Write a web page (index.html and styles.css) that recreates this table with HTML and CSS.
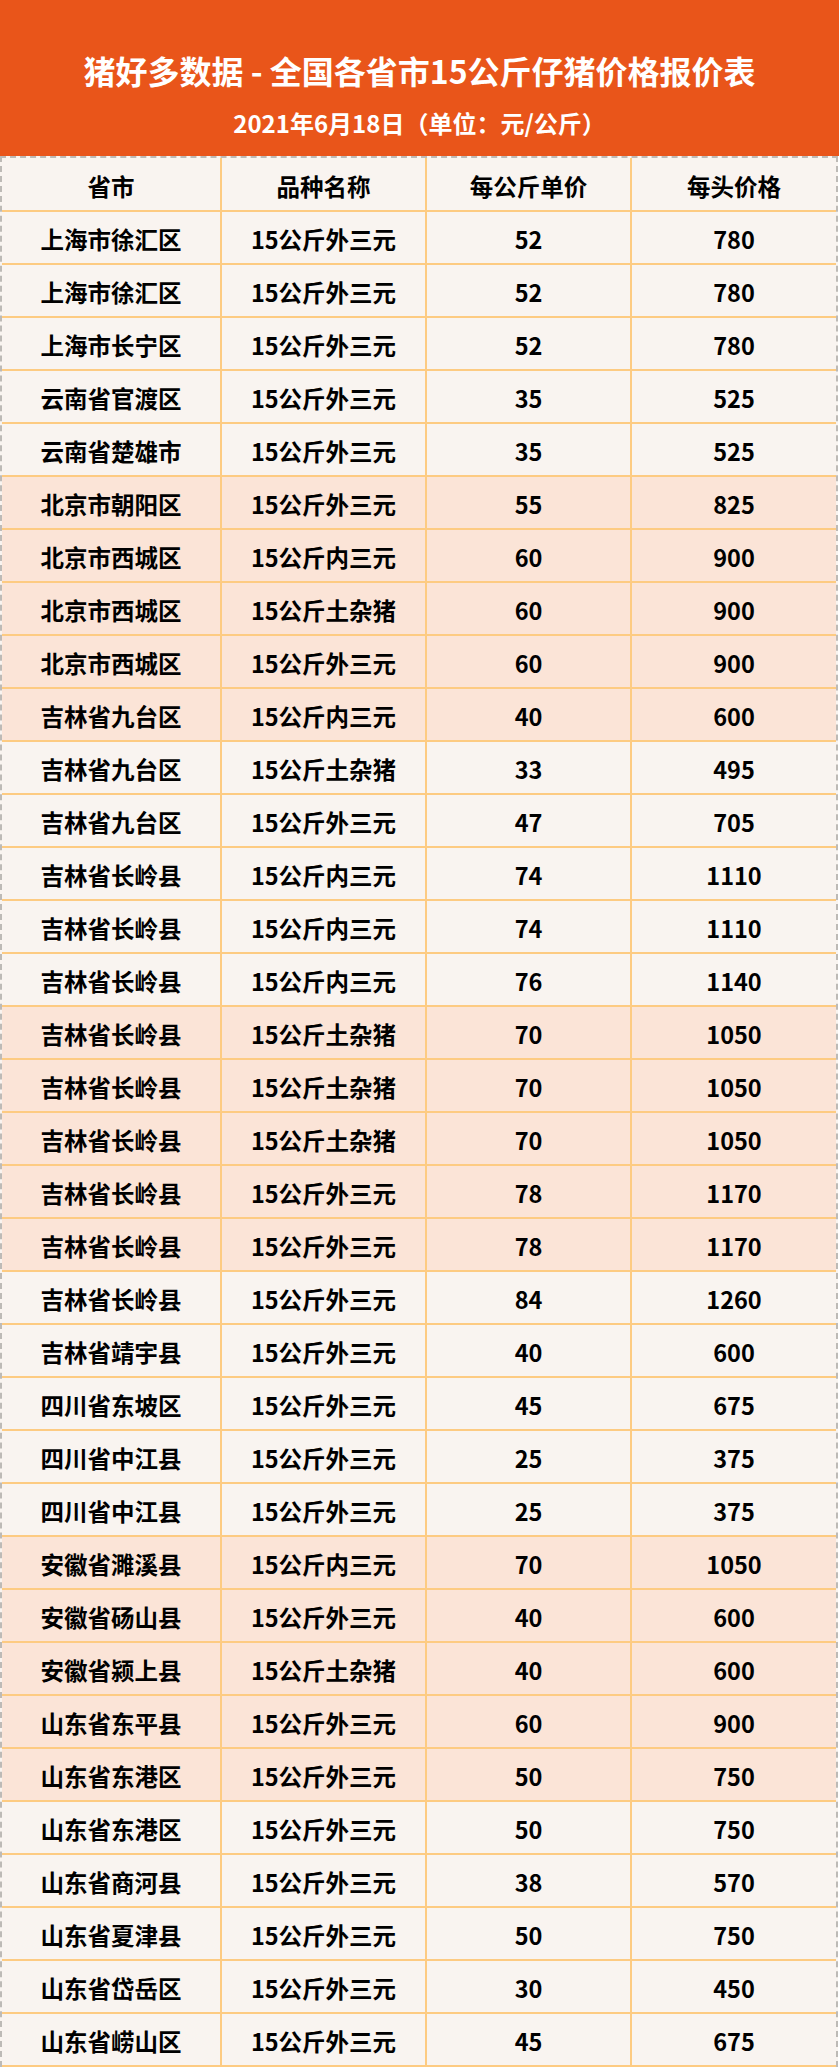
FILE: index.html
```html
<!DOCTYPE html>
<html lang="zh-CN">
<head>
<meta charset="utf-8">
<title>猪好多数据 - 全国各省市15公斤仔猪价格报价表</title>
<link rel="stylesheet" href="styles.css">
</head>
<body>
<div class="page">
  <header class="banner">
    <h1 class="title">猪好多数据 - 全国各省市15公斤仔猪价格报价表</h1>
    <p class="subtitle">2021年6月18日（单位：元/公斤）</p>
  </header>
  <div class="table">
    <div class="row head"><div class="cell">省市</div><div class="cell">品种名称</div><div class="cell">每公斤单价</div><div class="cell">每头价格</div></div>
    <div class="row"><div class="cell">上海市徐汇区</div><div class="cell">15公斤外三元</div><div class="cell">52</div><div class="cell">780</div></div>
    <div class="row"><div class="cell">上海市徐汇区</div><div class="cell">15公斤外三元</div><div class="cell">52</div><div class="cell">780</div></div>
    <div class="row"><div class="cell">上海市长宁区</div><div class="cell">15公斤外三元</div><div class="cell">52</div><div class="cell">780</div></div>
    <div class="row"><div class="cell">云南省官渡区</div><div class="cell">15公斤外三元</div><div class="cell">35</div><div class="cell">525</div></div>
    <div class="row"><div class="cell">云南省楚雄市</div><div class="cell">15公斤外三元</div><div class="cell">35</div><div class="cell">525</div></div>
    <div class="row hl"><div class="cell">北京市朝阳区</div><div class="cell">15公斤外三元</div><div class="cell">55</div><div class="cell">825</div></div>
    <div class="row hl"><div class="cell">北京市西城区</div><div class="cell">15公斤内三元</div><div class="cell">60</div><div class="cell">900</div></div>
    <div class="row hl"><div class="cell">北京市西城区</div><div class="cell">15公斤土杂猪</div><div class="cell">60</div><div class="cell">900</div></div>
    <div class="row hl"><div class="cell">北京市西城区</div><div class="cell">15公斤外三元</div><div class="cell">60</div><div class="cell">900</div></div>
    <div class="row hl"><div class="cell">吉林省九台区</div><div class="cell">15公斤内三元</div><div class="cell">40</div><div class="cell">600</div></div>
    <div class="row"><div class="cell">吉林省九台区</div><div class="cell">15公斤土杂猪</div><div class="cell">33</div><div class="cell">495</div></div>
    <div class="row"><div class="cell">吉林省九台区</div><div class="cell">15公斤外三元</div><div class="cell">47</div><div class="cell">705</div></div>
    <div class="row"><div class="cell">吉林省长岭县</div><div class="cell">15公斤内三元</div><div class="cell">74</div><div class="cell">1110</div></div>
    <div class="row"><div class="cell">吉林省长岭县</div><div class="cell">15公斤内三元</div><div class="cell">74</div><div class="cell">1110</div></div>
    <div class="row"><div class="cell">吉林省长岭县</div><div class="cell">15公斤内三元</div><div class="cell">76</div><div class="cell">1140</div></div>
    <div class="row hl"><div class="cell">吉林省长岭县</div><div class="cell">15公斤土杂猪</div><div class="cell">70</div><div class="cell">1050</div></div>
    <div class="row hl"><div class="cell">吉林省长岭县</div><div class="cell">15公斤土杂猪</div><div class="cell">70</div><div class="cell">1050</div></div>
    <div class="row hl"><div class="cell">吉林省长岭县</div><div class="cell">15公斤土杂猪</div><div class="cell">70</div><div class="cell">1050</div></div>
    <div class="row hl"><div class="cell">吉林省长岭县</div><div class="cell">15公斤外三元</div><div class="cell">78</div><div class="cell">1170</div></div>
    <div class="row hl"><div class="cell">吉林省长岭县</div><div class="cell">15公斤外三元</div><div class="cell">78</div><div class="cell">1170</div></div>
    <div class="row"><div class="cell">吉林省长岭县</div><div class="cell">15公斤外三元</div><div class="cell">84</div><div class="cell">1260</div></div>
    <div class="row"><div class="cell">吉林省靖宇县</div><div class="cell">15公斤外三元</div><div class="cell">40</div><div class="cell">600</div></div>
    <div class="row"><div class="cell">四川省东坡区</div><div class="cell">15公斤外三元</div><div class="cell">45</div><div class="cell">675</div></div>
    <div class="row"><div class="cell">四川省中江县</div><div class="cell">15公斤外三元</div><div class="cell">25</div><div class="cell">375</div></div>
    <div class="row"><div class="cell">四川省中江县</div><div class="cell">15公斤外三元</div><div class="cell">25</div><div class="cell">375</div></div>
    <div class="row hl"><div class="cell">安徽省濉溪县</div><div class="cell">15公斤内三元</div><div class="cell">70</div><div class="cell">1050</div></div>
    <div class="row hl"><div class="cell">安徽省砀山县</div><div class="cell">15公斤外三元</div><div class="cell">40</div><div class="cell">600</div></div>
    <div class="row hl"><div class="cell">安徽省颍上县</div><div class="cell">15公斤土杂猪</div><div class="cell">40</div><div class="cell">600</div></div>
    <div class="row hl"><div class="cell">山东省东平县</div><div class="cell">15公斤外三元</div><div class="cell">60</div><div class="cell">900</div></div>
    <div class="row hl"><div class="cell">山东省东港区</div><div class="cell">15公斤外三元</div><div class="cell">50</div><div class="cell">750</div></div>
    <div class="row"><div class="cell">山东省东港区</div><div class="cell">15公斤外三元</div><div class="cell">50</div><div class="cell">750</div></div>
    <div class="row"><div class="cell">山东省商河县</div><div class="cell">15公斤外三元</div><div class="cell">38</div><div class="cell">570</div></div>
    <div class="row"><div class="cell">山东省夏津县</div><div class="cell">15公斤外三元</div><div class="cell">50</div><div class="cell">750</div></div>
    <div class="row"><div class="cell">山东省岱岳区</div><div class="cell">15公斤外三元</div><div class="cell">30</div><div class="cell">450</div></div>
    <div class="row"><div class="cell">山东省崂山区</div><div class="cell">15公斤外三元</div><div class="cell">45</div><div class="cell">675</div></div>
  </div>
</div>
</body>
</html>
```
FILE: styles.css
```css
* { box-sizing: border-box; }
html, body { margin: 0; padding: 0; background: #ffffff; }
body {
  font-family: "Noto Sans CJK SC", "Noto Sans", sans-serif;
  color: #000;
  width: 839px;
}
.page { width: 839px; }

.banner {
  height: 156px;
  background: #e9551a;
  color: #fff;
  display: flex;
  flex-direction: column;
  align-items: center;
  padding-top: 50px;
}
.title {
  margin: 0;
  font-size: 32px;
  font-weight: 700;
  line-height: 40px;
  white-space: nowrap;
}
.subtitle {
  margin: 18px 0 0;
  font-size: 24px;
  font-weight: 700;
  line-height: 30px;
  white-space: nowrap;
}

.table {
  width: 838px;
  border-top: 2px dashed #bdbab6;
  border-left: 2px dashed #bdbab6;
  border-right: 2px dashed #bdbab6;
  background: #f9f4f0;
}
.row {
  display: grid;
  grid-template-columns: 220px 205px 205px 1fr;
  height: 53px;
  border-bottom: 2px solid #fdcb82;
  background: #f9f4f0;
}
.row.head { height: 54px; }
.row.hl { background: #fbe4d7; }
.cell {
  display: flex;
  align-items: center;
  justify-content: center;
  padding-top: 5px;
  font-size: 23.5px;
  font-weight: 700;
  line-height: 1;
  white-space: nowrap;
  border-right: 2px solid #fdcb82;
}
.cell:last-child { border-right: none; }
```
